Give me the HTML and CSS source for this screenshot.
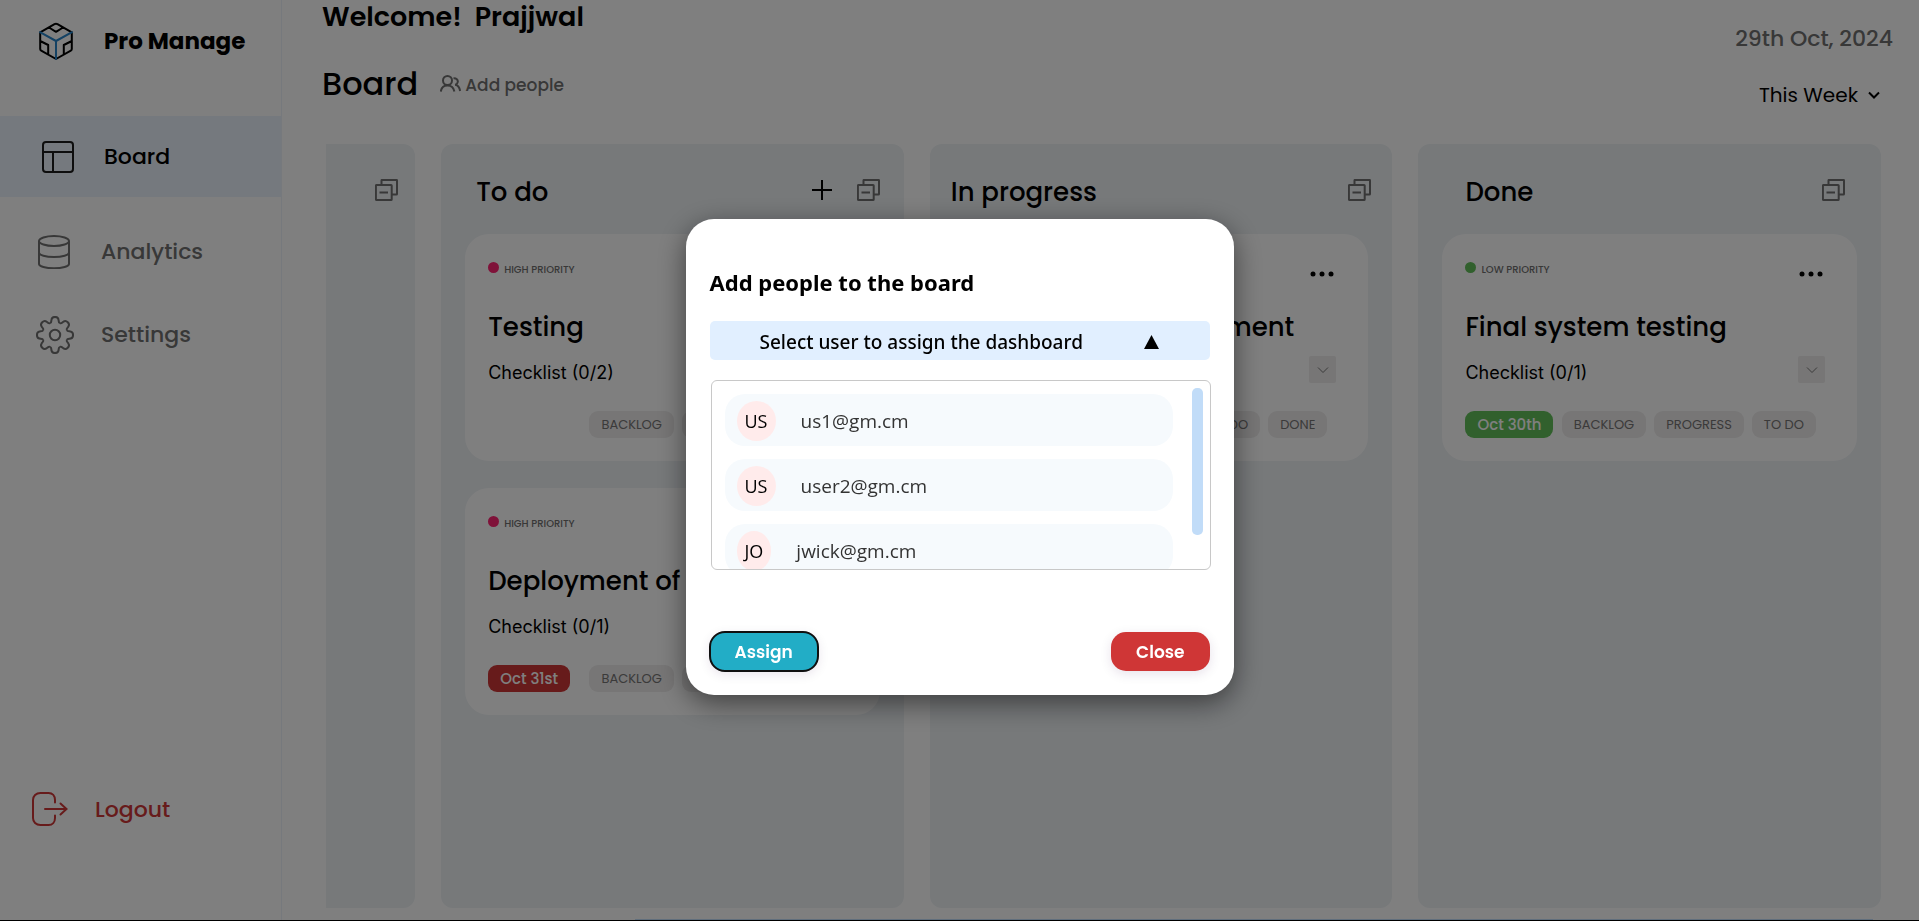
FILE: index.html
```html
<!DOCTYPE html>
<html lang="en">
<head>
<meta charset="utf-8">
<title>Pro Manage</title>
<link rel="stylesheet" href="styles.css">
</head>
<body>
<svg class="defs" aria-hidden="true">
  <symbol id="i-collapse" viewBox="0 0 23 22"><path d="M6.5 6V1.5a.6.6 0 0 1 .6-.6h14.300a.6.6 0 0 1 .6.6v13.400a.6.6 0 0 1-.6.6H17M1.500 6h14.600a.6.6 0 0 1 .6.6v13.800a.6.6 0 0 1-.6.6H1.500a.6.6 0 0 1-.6-.6V6.600a.6.6 0 0 1 .6-.6zM4.500 13.500h8.500"/></symbol>
  <symbol id="i-dots" viewBox="0 0 24 6"><circle cx="3" cy="3" r="2.500"/><circle cx="12" cy="3" r="2.500"/><circle cx="21" cy="3" r="2.500"/></symbol>
  <symbol id="i-chevron" viewBox="0 0 12 8"><path d="M1 1.500l5 5 5-5"/></symbol>
</svg>
<div class="app">
  <aside class="sidebar">
    <div class="brand">
      <svg class="brand-icon" width="36" height="38" viewBox="38 22 36 38"><path class="ink" d="M40.200 32.300V49a2 2 0 0 0 1 1.700L56 59l14.800-8.300a2 2 0 0 0 1-1.700V32.300M40.200 32.300l14.300-8.200a3 3 0 0 1 3 0l14.300 8.200M49 27.500l7 4.300 7-4.300M40.200 41l8 4v9M71.800 41l-8 4v9"/><path class="blue" d="M40 32.200L56 41l16-8.800M56 41v18"/></svg>
      <span>Pro Manage</span>
    </div>
    <nav class="nav">
      <a class="nav-link active" href="#board"><svg width="32" height="32" viewBox="0 0 32 32"><path d="M4 1h24a3 3 0 0 1 3 3v24a3 3 0 0 1-3 3H4a3 3 0 0 1-3-3V4a3 3 0 0 1 3-3zM1 11h30M11 11v20"/></svg><span>Board</span></a>
      <a class="nav-link" href="#analytics"><svg width="32" height="34" viewBox="0 0 32 34"><ellipse cx="16" cy="6" rx="15" ry="5"/><path d="M1 6v23c0 2.500 6.700 4.300 15 4.300s15-1.800 15-4.300V6M1 17.500c0 2.700 6.700 4.500 15 4.500s15-1.800 15-4.500"/></svg><span>Analytics</span></a>
      <a class="nav-link settings" href="#settings"><svg width="38" height="38" viewBox="-19 -19 38 38"><defs><path id="tooth" d="M-4.900-11.830C-3.240-12.500-3.900-14-3.500-15.500C-2.800-18.900 2.800-18.900 3.500-15.500C3.900-14 3.240-12.500 4.900-11.830"/></defs><circle r="5.200"/><use href="#tooth"/><use href="#tooth" transform="rotate(45)"/><use href="#tooth" transform="rotate(90)"/><use href="#tooth" transform="rotate(135)"/><use href="#tooth" transform="rotate(180)"/><use href="#tooth" transform="rotate(225)"/><use href="#tooth" transform="rotate(270)"/><use href="#tooth" transform="rotate(315)"/></svg><span>Settings</span></a>
    </nav>
    <button class="logout" type="button"><svg width="36" height="34" viewBox="0 0 36 34"><path d="M23 10.500V8c0-4-2.500-7-6.500-7h-8C4 1 1 4 1 8v18c0 4 3 7 7.500 7h8c4 0 6.500-3 6.500-7v-2.500M13 17h21M28.500 11.500L34.500 17l-6 5.500"/></svg><span>Logout</span></button>
  </aside>

  <main class="main">
    <header class="top">
      <div>
        <p class="welcome">Welcome!&nbsp; Prajjwal</p>
        <div class="board-line">
          <h1>Board</h1>
          <button class="add-people" type="button"><svg width="21" height="17" viewBox="0 0 21 17"><circle cx="7.500" cy="5.500" r="4.500"/><path d="M.800 16.500c.5-3.600 2.900-6 6.700-6s6.200 2.400 6.900 6M13.500 3.300c3-.2 4.500 1.500 4.300 3.500-.2 1.500-1.200 2.600-2.600 3 2.600.5 4.400 2.700 4.900 6.200"/></svg><span>Add people</span></button>
        </div>
      </div>
      <div class="top-right">
        <time datetime="2024-10-29">29th Oct, 2024</time>
        <label class="range"><select aria-label="Period"><option>This Week</option></select><svg width="12" height="8"><use href="#i-chevron"/></svg></label>
      </div>
    </header>

    <div class="columns">
      <section class="column column-backlog" aria-label="Backlog">
        <header><button type="button" aria-label="Collapse all"><svg class="collapse" width="23" height="22"><use href="#i-collapse"/></svg></button></header>
      </section>

      <section class="column column-todo">
        <header><h2>To do</h2><button type="button" aria-label="Add task"><svg class="plus" width="20" height="20" viewBox="0 0 20 20"><path d="M10 0v20M0 10h20"/></svg></button><button type="button" aria-label="Collapse all"><svg class="collapse" width="23" height="22"><use href="#i-collapse"/></svg></button></header>
        <article class="card">
          <div class="meta"><i class="dot high"></i><span>HIGH PRIORITY</span><button type="button" aria-label="More"><svg class="dots" width="24" height="6"><use href="#i-dots"/></svg></button></div>
          <h3>Testing</h3>
          <div class="check"><span>Checklist (0/2)</span><button type="button" aria-label="Expand"><svg width="12" height="8"><use href="#i-chevron"/></svg></button></div>
          <div class="chips"><button type="button" class="chip">BACKLOG</button><button type="button" class="chip">PROGRESS</button><button type="button" class="chip">DONE</button></div>
        </article>
        <article class="card">
          <div class="meta"><i class="dot high"></i><span>HIGH PRIORITY</span><button type="button" aria-label="More"><svg class="dots" width="24" height="6"><use href="#i-dots"/></svg></button></div>
          <h3>Deployment of app</h3>
          <div class="check"><span>Checklist (0/1)</span><button type="button" aria-label="Expand"><svg width="12" height="8"><use href="#i-chevron"/></svg></button></div>
          <div class="chips"><span class="due late">Oct 31st</span><button type="button" class="chip">BACKLOG</button><button type="button" class="chip">PROGRESS</button><button type="button" class="chip">DONE</button></div>
        </article>
      </section>

      <section class="column column-progress">
        <header><h2>In progress</h2><button type="button" aria-label="Collapse all"><svg class="collapse" width="23" height="22"><use href="#i-collapse"/></svg></button></header>
        <article class="card">
          <div class="meta"><i class="dot high"></i><span>HIGH PRIORITY</span><button type="button" aria-label="More"><svg class="dots" width="24" height="6"><use href="#i-dots"/></svg></button></div>
          <h3>Web page development</h3>
          <div class="check"><span>Checklist (0/1)</span><button type="button" aria-label="Expand"><svg width="12" height="8"><use href="#i-chevron"/></svg></button></div>
          <div class="chips"><button type="button" class="chip">BACKLOG</button><button type="button" class="chip">TO DO</button><button type="button" class="chip">DONE</button></div>
        </article>
      </section>

      <section class="column column-done">
        <header><h2>Done</h2><button type="button" aria-label="Collapse all"><svg class="collapse" width="23" height="22"><use href="#i-collapse"/></svg></button></header>
        <article class="card">
          <div class="meta"><i class="dot low"></i><span>LOW PRIORITY</span><button type="button" aria-label="More"><svg class="dots" width="24" height="6"><use href="#i-dots"/></svg></button></div>
          <h3>Final system testing</h3>
          <div class="check"><span>Checklist (0/1)</span><button type="button" aria-label="Expand"><svg width="12" height="8"><use href="#i-chevron"/></svg></button></div>
          <div class="chips"><span class="due done">Oct 30th</span><button type="button" class="chip">BACKLOG</button><button type="button" class="chip">PROGRESS</button><button type="button" class="chip">TO DO</button></div>
        </article>
      </section>
    </div>
    <div class="hscroll"></div>
  </main>
</div>

<div class="overlay">
  <div class="modal" role="dialog" aria-labelledby="modal-title">
    <h2 id="modal-title">Add people to the board</h2>
    <button class="picker" type="button" aria-expanded="true"><span>Select user to assign the dashboard</span><svg width="15" height="14" viewBox="0 0 15 14"><path d="M7.500 0L15 14H0z"/></svg></button>
    <div class="people">
      <ul>
        <li><span class="avatar">US</span><span>us1@gm.cm</span></li>
        <li><span class="avatar">US</span><span>user2@gm.cm</span></li>
        <li><span class="avatar">JO</span><span>jwick@gm.cm</span></li>
      </ul>
      <div class="thumb"></div>
    </div>
    <div class="actions"><button class="assign" type="button">Assign</button><button class="close" type="button">Close</button></div>
  </div>
</div>
</body>
</html>
```
FILE: styles.css
```css
* { box-sizing: border-box; }
body { margin: 0; background: #000; font-family: Poppins, Inter, sans-serif; font-weight: 500; color: #000; }
h1, h2, h3, p, ul { margin: 0; padding: 0; font-weight: 500; }
button { border: 0; padding: 0; background: none; font: inherit; color: inherit; display: flex; align-items: center; }
svg { display: block; flex: none; fill: none; stroke: currentColor; }
.defs { position: absolute; width: 0; height: 0; }

.app { display: flex; height: 100vh; border-bottom: 1px solid #000; background: #fff; overflow: hidden; }

.sidebar { flex: 0 0 282px; display: flex; flex-direction: column; border-right: 1px solid #edf2fa; }
.brand { display: flex; align-items: center; gap: 30px; height: 82px; padding-left: 38px; font-size: 23px; font-weight: 700; }
.brand-icon { stroke-width: 2; stroke-linecap: round; stroke-linejoin: round; }
.brand .blue { stroke: #2884c8; }
.nav { padding-top: 34px; }
.nav-link { display: flex; align-items: center; gap: 31px; height: 83px; padding-left: 38px; font-size: 22px; color: #707070; text-decoration: none; }
.nav-link svg { stroke-width: 2; }
.nav-link.active { height: 81px; padding-left: 42px; gap: 30px; color: #000; background: #ebf3fc; margin-bottom: 13px; }
.nav-link.active svg { stroke: #1c1c1c; }
.nav-link.settings { padding-left: 36px; gap: 27px; }
.logout { gap: 27px; margin: auto 0 86px; padding-left: 32px; height: 50px; font-size: 22px; color: #cf3636; }
.logout svg { stroke-width: 2; stroke-linecap: round; }

.main { flex: 1; min-width: 0; display: flex; flex-direction: column; padding: 0 38px 0 40px; }
.top { display: flex; justify-content: space-between; height: 144px; }
.welcome { font-size: 27px; font-weight: 600; line-height: 34px; }
.board-line { display: flex; align-items: center; gap: 22px; margin-top: 28px; }
.board-line h1 { font-size: 32px; line-height: 44px; }
.add-people { gap: 4px; padding-top: 2px; font-size: 17px; color: #707070; }
.add-people svg { margin-bottom: 4px; stroke-width: 2; }
.top-right { display: flex; flex-direction: column; align-items: flex-end; padding-top: 23px; margin-right: -12px; font-size: 22px; line-height: 32px; color: #707070; }
.range { display: flex; align-items: center; gap: 10px; margin: 24px 13px 0 0; color: #000; }
.range select { appearance: none; border: 0; padding: 0; background: none; color: #000; font: 400 20px/32px Poppins, Inter, sans-serif; }
.range svg { stroke-width: 2; }

.columns { flex: 1; display: flex; justify-content: flex-end; gap: 26px; margin-left: 4px; min-height: 0; overflow: hidden; }
.column { flex: 0 0 29.75%; background: #eef2f5; border-radius: 12px; padding: 0 24px; }
.column > header { display: flex; align-items: center; justify-content: flex-end; gap: 25px; height: 90px; padding: 2px 0 0 11px; }
.column h2 { flex: 1; padding-top: 4px; font-size: 26px; line-height: 36px; }
.column-backlog { padding: 0 17px; }
.column-progress > header { margin: 0 -3px; padding-left: 0; }
.column-done > header { padding: 2px 12px 0 23px; }
.plus { stroke-width: 2; }
.collapse { stroke: #707070; stroke-width: 2; }

.card { height: 227px; margin-bottom: 27px; padding: 28px 32px 23px 23px; border-radius: 24px; background: #fff; }
.meta { display: flex; align-items: flex-start; gap: 5px; height: 46px; font-size: 10px; line-height: 16px; color: #707070; }
.meta button { margin: 9px 2px 0 auto; }
.dot { width: 11px; height: 11px; border-radius: 50%; }
.high { background: #ff2473; }
.low { background: #63c05b; }
.dots { fill: #000; stroke: none; color: #000; }
.card h3 { font-size: 26px; line-height: 38px; }
.check { display: flex; justify-content: space-between; align-items: center; margin-top: 10px; height: 27px; font: 400 18px/27px Inter, sans-serif; }
.check span { padding-top: 6px; }
.check button { width: 27px; height: 27px; justify-content: center; border-radius: 2px; background: #eeecec; color: #767575; }
.chips { display: flex; justify-content: flex-end; gap: 8px; margin: 28px 9px 0 0; }
.chip { height: 27px; padding: 0 12px; border-radius: 9px; background: #eeecec; font-size: 13px; font-weight: 400; color: #767575; }
.due { margin-right: auto; height: 27px; padding: 0 12px; border-radius: 9px; font-size: 15px; line-height: 27px; color: #fff; }
.late { background: #cf3636; }
.done { background: #63c05b; }
.hscroll { height: 1px; margin: 11px 8px 0 313px; background: #c1dcf8; }

.overlay { position: fixed; inset: 0; display: flex; align-items: center; justify-content: center; padding-bottom: 7px; background: rgba(0, 0, 0, .5); }
.modal { width: 548px; padding: 44px 24px 24px; border-radius: 28px; background: #fff; box-shadow: 0 8px 28px rgba(0, 0, 0, .5); font-family: "Segoe UI", "Noto Sans", sans-serif; font-weight: 400; }
.modal h2 { font-size: 22px; font-weight: 700; line-height: 38px; }
.picker { width: 100%; height: 39px; margin-top: 20px; padding: 2px 51px 0 50px; justify-content: space-between; border-radius: 5px; background: #e1efff; font-size: 19px; font-weight: 500; }
.picker svg { fill: #000; stroke: none; }
.people { display: flex; height: 190px; margin: 20px -1px 0 1px; padding: 0 7px 0 13px; border: 1px solid #c8c8c8; border-radius: 6px; overflow: hidden; }
.people ul { flex: 1; margin-right: 19px; padding-top: 13px; list-style: none; }
.people li { display: flex; align-items: center; gap: 25px; height: 52px; margin-bottom: 13px; padding: 1px 0 0 12px; border-radius: 20px; background: #f6fafd; font-family: "Segoe UI", "Open Sans", sans-serif; font-size: 19px; line-height: 40px; color: #333; }
.avatar { padding: 0 8px; border-radius: 50%; background: #ffebeb; font-size: 18px; color: #000; }
.thumb { width: 11px; height: 147px; margin-top: 7px; border-radius: 5px; background: #c1dcf8; }
.actions { display: flex; justify-content: space-between; margin-top: 62px; }
.actions button { justify-content: center; height: 39px; padding: 1px 25px 0; border-radius: 15px; color: #fff; font: 600 17px/27px Poppins, Inter, sans-serif; box-shadow: 0 3px 12px rgba(60, 20, 80, .12); }
.actions .assign { background: #22adc6; outline: 2px solid #101010; outline-offset: -1px; }
.actions .close { background: #cf3636; }
```
